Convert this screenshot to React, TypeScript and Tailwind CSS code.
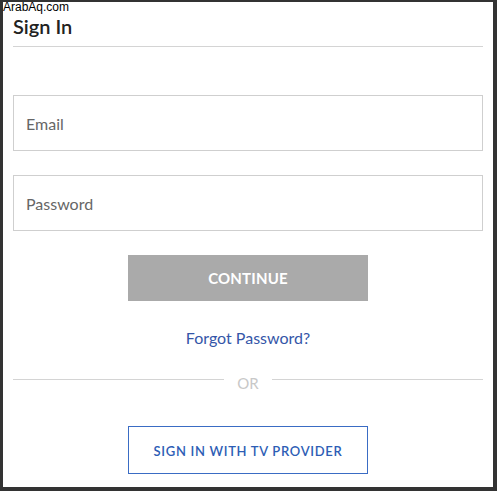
import React from 'react';

const App: React.FC = () => {
  return (
    <div className="relative w-[497px] h-[491px] bg-white border-[#333] border-l-[3px] border-t-2 border-r-4 border-b-4 box-border font-['Lato',sans-serif]">
      {/* Watermark */}
      <div className="absolute left-0 -top-px text-[12px] leading-[12px] text-black font-['Liberation_Sans',Arial,sans-serif]">
        ArabAq.com
      </div>

      <div className="px-[10px] pt-[14px]">
        {/* Header */}
        <h1 className="text-[20px] leading-[20px] font-semibold text-[#222]">Sign In</h1>
        <div className="mt-[10px] h-px bg-[#d4d4d4]"></div>

        {/* Fields */}
        <div className="mt-[48px] flex flex-col gap-6">
          <input
            type="email"
            placeholder="Email"
            className="h-[56px] w-full border border-[#cfcfcf] px-3 text-[16px] text-[#555] placeholder:text-[#666] outline-none"
          />
          <input
            type="password"
            placeholder="Password"
            className="h-[56px] w-full border border-[#cfcfcf] px-3 text-[16px] text-[#555] placeholder:text-[#666] outline-none"
          />
        </div>

        {/* Continue */}
        <div className="mt-6 flex justify-center">
          <button className="w-[240px] h-[46px] bg-[#aaaaaa] text-white text-[15px] font-bold tracking-[0.2px]">
            CONTINUE
          </button>
        </div>

        <div className="mt-[27px] text-center text-[16px] leading-[20px] text-[#3456a8]">
          Forgot Password?
        </div>

        {/* OR divider */}
        <div className="mt-[26px] flex items-center">
          <div className="flex-1 h-px bg-[#d4d4d4] mb-2"></div>
          <span className="px-[13px] text-[15px] leading-[18px] text-[#c8c8c8]">OR</span>
          <div className="flex-1 h-px bg-[#d4d4d4] mb-2"></div>
        </div>

        {/* TV provider */}
        <div className="mt-[34px] flex justify-center">
          <button className="w-[240px] h-[48px] pt-1 border border-[#3a6cc4] text-[#2d5db5] text-[13px] font-semibold tracking-[0.7px]">
            SIGN IN WITH TV PROVIDER
          </button>
        </div>
      </div>
    </div>
  );
};

export default App;
